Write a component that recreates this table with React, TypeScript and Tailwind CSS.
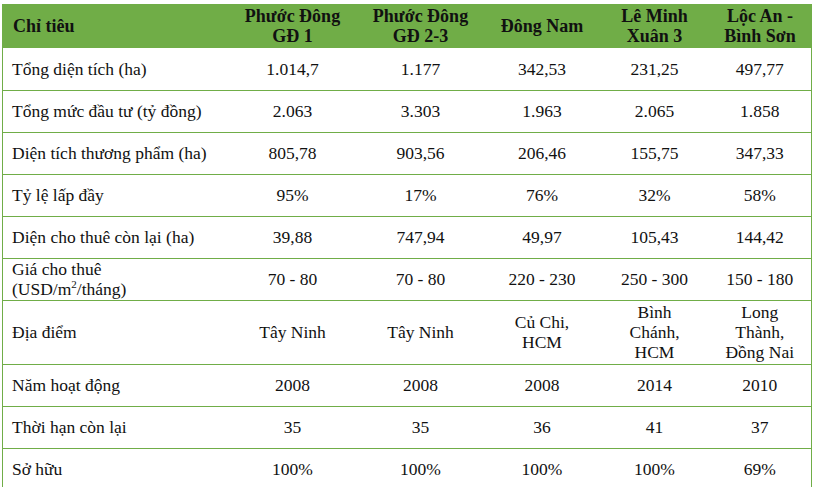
const HEADERS: string[][] = [
  ["Phước Đông", "GĐ 1"],
  ["Phước Đông", "GĐ 2-3"],
  ["Đông Nam"],
  ["Lê Minh", "Xuân 3"],
  ["Lộc An -", "Bình Sơn"],
];

type Row = {
  label: React.ReactNode;
  values: string[][];
  tall?: boolean;
};

const ROWS: Row[] = [
  { label: "Tổng diện tích (ha)", values: [["1.014,7"], ["1.177"], ["342,53"], ["231,25"], ["497,77"]] },
  { label: "Tổng mức đầu tư (tỷ đồng)", values: [["2.063"], ["3.303"], ["1.963"], ["2.065"], ["1.858"]] },
  { label: "Diện tích thương phẩm (ha)", values: [["805,78"], ["903,56"], ["206,46"], ["155,75"], ["347,33"]] },
  { label: "Tỷ lệ lấp đầy", values: [["95%"], ["17%"], ["76%"], ["32%"], ["58%"]] },
  { label: "Diện cho thuê còn lại (ha)", values: [["39,88"], ["747,94"], ["49,97"], ["105,43"], ["144,42"]] },
  {
    label: (
      <>
        <span className="block">Giá cho thuê</span>
        <span className="block">
          (USD/m<sup className="text-[11px] leading-none -top-[7px]">2</sup>/tháng)
        </span>
      </>
    ),
    values: [["70 - 80"], ["70 - 80"], ["220 - 230"], ["250 - 300"], ["150 - 180"]],
  },
  {
    label: "Địa điểm",
    values: [["Tây Ninh"], ["Tây Ninh"], ["Củ Chi,", "HCM"], ["Bình", "Chánh,", "HCM"], ["Long", "Thành,", "Đồng Nai"]],
    tall: true,
  },
  { label: "Năm hoạt động", values: [["2008"], ["2008"], ["2008"], ["2014"], ["2010"]] },
  { label: "Thời hạn còn lại", values: [["35"], ["35"], ["36"], ["41"], ["37"]] },
  { label: "Sở hữu", values: [["100%"], ["100%"], ["100%"], ["100%"], ["69%"]] },
];

function Lines({ lines }: { lines: string[] }) {
  return (
    <>
      {lines.map((l, i) => (
        <span key={i} className="block">
          {l}
        </span>
      ))}
    </>
  );
}

export default function App() {
  return (
    <div className="w-[814px] h-[487px] overflow-hidden bg-white pt-[4px] pl-[2px] font-[family-name:'Liberation_Serif','Times_New_Roman',serif] text-[#111]">
      <table className="table-fixed border-collapse w-[809px] text-[17.5px] leading-[20px]">
        <colgroup>
          <col className="w-[225px]" />
          <col className="w-[130px]" />
          <col className="w-[126px]" />
          <col className="w-[117px]" />
          <col className="w-[108px]" />
          <col className="w-[103px]" />
        </colgroup>
        <thead>
          <tr className="h-[44px] bg-[#70ad47] text-[18px]">
            <th className="text-left pl-[10px] font-bold border-x border-[#70ad47]">Chỉ tiêu</th>
            {HEADERS.map((h, i) => (
              <th key={i} className="text-center font-bold border-x border-[#70ad47]">
                <Lines lines={h} />
              </th>
            ))}
          </tr>
        </thead>
        <tbody>
          {ROWS.map((r, i) => (
            <tr
              key={i}
              className={`${r.tall ? "h-[64px]" : "h-[42px]"} border-b border-[#70ad47]`}
            >
              <td className="pl-[9px] text-left border-l border-[#70ad47]">{r.label}</td>
              {r.values.map((v, j) => (
                <td
                  key={j}
                  className={`text-center ${j === r.values.length - 1 ? "border-r border-[#70ad47]" : ""}`}
                >
                  <Lines lines={v} />
                </td>
              ))}
            </tr>
          ))}
        </tbody>
      </table>
    </div>
  );
}
